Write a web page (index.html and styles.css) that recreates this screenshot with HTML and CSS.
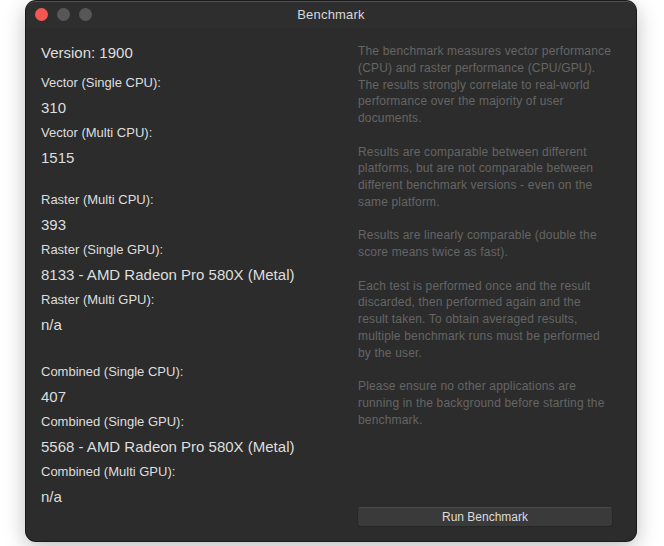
FILE: index.html
```html
<!DOCTYPE html>
<html>
<head>
<meta charset="utf-8">
<link rel="stylesheet" href="styles.css">
</head>
<body>
<div class="window">
  <div class="titlebar">
    <div class="lights">
      <span class="light red"></span>
      <span class="light gray"></span>
      <span class="light gray"></span>
    </div>
    <div class="title">Benchmark</div>
  </div>
  <div class="content">
    <div class="results">
      <div class="version">Version: 1900</div>
      <div class="group">
        <div class="label">Vector (Single CPU):</div>
        <div class="value">310</div>
        <div class="label">Vector (Multi CPU):</div>
        <div class="value">1515</div>
      </div>
      <div class="group gap1">
        <div class="label">Raster (Multi CPU):</div>
        <div class="value">393</div>
        <div class="label">Raster (Single GPU):</div>
        <div class="value">8133 - AMD Radeon Pro 580X (Metal)</div>
        <div class="label">Raster (Multi GPU):</div>
        <div class="value">n/a</div>
      </div>
      <div class="group gap2">
        <div class="label">Combined (Single CPU):</div>
        <div class="value">407</div>
        <div class="label">Combined (Single GPU):</div>
        <div class="value">5568 - AMD Radeon Pro 580X (Metal)</div>
        <div class="label">Combined (Multi GPU):</div>
        <div class="value">n/a</div>
      </div>
    </div>
    <div class="info">
      <div class="text">
        <p>The benchmark measures vector performance (CPU) and raster performance (CPU/GPU). The results strongly correlate to real-world performance over the majority of user documents.</p>
        <p>Results are comparable between different platforms, but are not comparable between different benchmark versions - even on the same platform.</p>
        <p>Results are linearly comparable (double the score means twice as fast).</p>
        <p>Each test is performed once and the result discarded, then performed again and the result taken. To obtain averaged results, multiple benchmark runs must be performed by the user.</p>
        <p>Please ensure no other applications are running in the background before starting the benchmark.</p>
      </div>
      <button class="run">Run Benchmark</button>
    </div>
  </div>
</div>
</body>
</html>
```
FILE: styles.css
```css
html, body {
  margin: 0;
  padding: 0;
  background: #ffffff;
  width: 664px;
  height: 546px;
  overflow: hidden;
}
body {
  font-family: "Liberation Sans", Arial, sans-serif;
  padding-top: 1px;
  padding-left: 26px;
  box-sizing: border-box;
}
.window {
  width: 610px;
  height: 540px;
  background: #2c2c2c;
  border-radius: 10px;
  box-shadow: 0 0 0 1px #1a1a1a, 0 6px 22px rgba(0,0,0,0.28);
  border-top: 1px solid #505050;
  box-sizing: border-box;
  display: flex;
  flex-direction: column;
  overflow: hidden;
}
.titlebar {
  height: 26px;
  position: relative;
  display: flex;
  align-items: center;
  justify-content: center;
  background: #2e2e2e;
}
.lights {
  position: absolute;
  left: 9px;
  top: 6px;
  display: flex;
  gap: 9px;
}
.light {
  width: 13px;
  height: 13px;
  border-radius: 50%;
  display: block;
}
.light.red { background: #f5564f; }
.light.gray { background: #575757; }
.title {
  color: #d9d9d9;
  font-size: 13px;
  margin-top: -2px;
  letter-spacing: 0.2px;
}
.content {
  flex: 1;
  display: flex;
}
.results {
  width: 317px;
  padding-left: 15px;
  padding-top: 12px;
  color: #dedede;
}
.version {
  font-size: 15px;
  line-height: 25px;
  height: 30px;
}
.label {
  font-size: 13px;
  line-height: 25px;
  height: 25px;
}
.value {
  font-size: 15px;
  line-height: 25px;
  height: 25px;
}
.gap1 { margin-top: 17px; }
.gap2 { margin-top: 22px; }
.info {
  width: 256px;
  display: flex;
  flex-direction: column;
  padding-top: 15px;
  padding-bottom: 14px;
}
.text {
  flex: 1;
  color: #656565;
  font-size: 12px;
  letter-spacing: 0.17px;
  line-height: 16.75px;
}
.text p {
  margin: 0 0 16.75px 0;
}
.run {
  margin-left: -1px;
  width: 256px;
  height: 20px;
  background: #3a3a3a;
  border: 1px solid #262626;
  border-top-color: #4a4a4a;
  border-radius: 4px;
  color: #dcdcdc;
  font-family: "Liberation Sans", Arial, sans-serif;
  font-size: 12px;
  padding: 0;
  line-height: 18px;
}
```
